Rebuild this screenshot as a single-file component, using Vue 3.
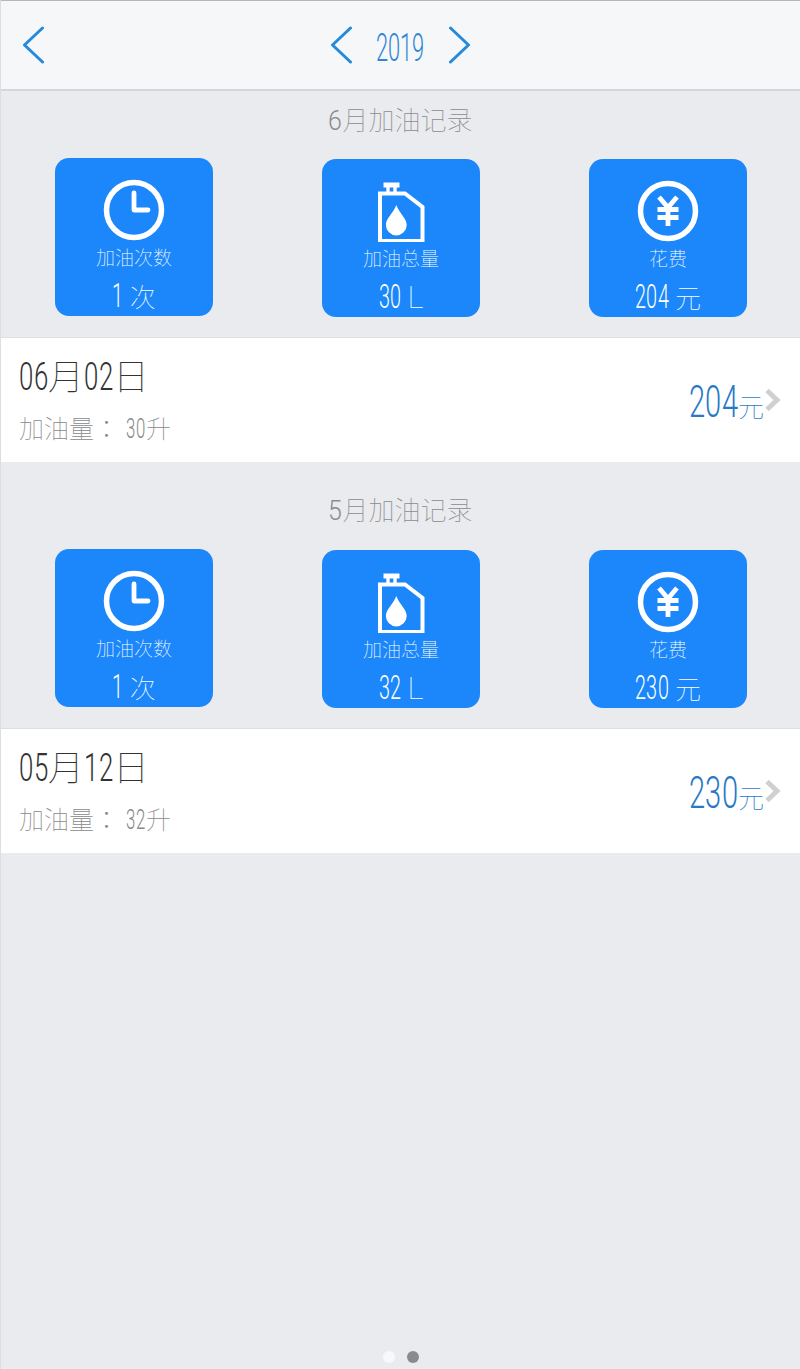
<template>
  <div class="page">
    <header class="top-bar">
      <button class="nav-btn back">
        <svg width="22" height="38" viewBox="0 0 22 38"><path d="M20.5 2 L2.5 19 L20.5 36" /></svg>
      </button>
      <div class="year-switch">
        <button class="nav-btn">
          <svg width="22" height="38" viewBox="0 0 22 38"><path d="M20.5 2 L2.5 19 L20.5 36" /></svg>
        </button>
        <span class="year"><span v-for="c in '2019'" class="d">{{ c }}</span></span>
        <button class="nav-btn">
          <svg width="22" height="38" viewBox="0 0 22 38"><path d="M1.5 2 L19.5 19 L1.5 36" /></svg>
        </button>
      </div>
    </header>

    <section v-for="(m, i) in months" :key="m.month" class="month" :class="{ first: i === 0 }">
      <h2 class="month-title"><span class="d">{{ m.month }}</span>月加油记录</h2>
      <div class="tiles">
        <div class="tile tile-left">
          <svg class="tile-icon" width="62" height="62" viewBox="0 0 62 62">
            <circle cx="31" cy="31" r="27.5" fill="none" stroke="#fff" stroke-width="5.5" />
            <path d="M31 14 V31 H45" fill="none" stroke="#fff" stroke-width="4.8" stroke-linecap="round" stroke-linejoin="round" />
          </svg>
          <div class="tile-label">加油次数</div>
          <div class="tile-value"><span class="d">1</span> 次</div>
        </div>
        <div class="tile">
          <svg class="tile-icon" width="62" height="62" viewBox="0 0 62 62">
            <path d="M10 13.5 H35 L52.5 27 V61 H10 Z" fill="none" stroke="#fff" stroke-width="4" />
            <path d="M18 7 V13 M25 7 V13" fill="none" stroke="#fff" stroke-width="3.4" />
            <rect x="13.5" y="2.5" width="16" height="5" fill="#fff" />
            <path d="M26.3 25 C29 33 36.7 38 36.7 45 A10.4 10.4 0 0 1 15.9 45 C15.9 38 23.6 33 26.3 25 Z" fill="#fff" />
          </svg>
          <div class="tile-label">加油总量</div>
          <div class="tile-value"><span v-for="c in String(m.liters)" class="d">{{ c }}</span> <span class="unit-l">L</span></div>
        </div>
        <div class="tile">
          <svg class="tile-icon" width="62" height="62" viewBox="0 0 62 62">
            <circle cx="31" cy="31" r="27.5" fill="none" stroke="#fff" stroke-width="5.5" />
            <path d="M22 17 L31 27.5 L40 17 M20.5 29.5 H41.5 M20.5 37.5 H41.5 M31 28 V46" fill="none" stroke="#fff" stroke-width="4.8" />
          </svg>
          <div class="tile-label">花费</div>
          <div class="tile-value"><span v-for="c in String(m.cost)" class="d">{{ c }}</span> 元</div>
        </div>
      </div>
      <div class="record">
        <div class="record-main">
          <div class="record-date"><span v-for="c in m.mm" class="d">{{ c }}</span>月<span v-for="c in m.dd" class="d">{{ c }}</span>日</div>
          <div class="record-sub">加油量<span class="colon">：</span><span v-for="c in String(m.liters)" class="d">{{ c }}</span>升</div>
        </div>
        <div class="record-cost"><span v-for="c in String(m.cost)" class="d">{{ c }}</span>元</div>
        <svg class="record-arrow" width="18" height="24" viewBox="0 0 18 24"><path d="M3 2.5 L13 12 L3 21.5" /></svg>
      </div>
    </section>

    <div class="dots">
      <span class="dot on"></span>
      <span class="dot"></span>
    </div>
  </div>
</template>

<script setup>
const months = [
  { month: 6, liters: 30, cost: 204, mm: '06', dd: '02' },
  { month: 5, liters: 32, cost: 230, mm: '05', dd: '12' },
]
</script>

<style>
html, body { margin: 0; }
</style>

<style scoped>
.page {
  min-height: 1369px;
  display: flex;
  flex-direction: column;
  box-sizing: border-box;
  background: #e9ebef;
  border-left: 1px solid #dcdee2;
  font-family: Roboto, "Noto Sans CJK SC", sans-serif;
  font-weight: 100;
}

/* digits are much narrower than any installed face, so squeeze them one by one */
.d {
  display: inline-block;
  width: var(--dw);
  font-size: var(--dsize);
  font-weight: 300;
  transform: scaleX(var(--ds));
  transform-origin: 0 50%;
}

.top-bar {
  height: 91px;
  box-sizing: border-box;
  flex: none;
  display: flex;
  align-items: center;
  justify-content: center;
  position: relative;
  background: #f5f7f9;
  border-top: 1px solid #b4b6b9;
  border-bottom: 2px solid #d4d6da;
}

.nav-btn {
  display: flex;
  padding: 0;
  border: 0;
  background: none;
}

.nav-btn path {
  fill: none;
  stroke: #2589dc;
  stroke-width: 3;
  stroke-linecap: round;
  stroke-linejoin: round;
}

.back {
  position: absolute;
  left: 21px;
  top: 25px;
}

.year-switch {
  display: flex;
  align-items: center;
  gap: 24px;
  margin-left: -1px;
}

.year {
  --dsize: 38px;
  --dw: 12.25px;
  --ds: 0.575;
  line-height: 38px;
  padding-top: 14px;
  color: #2f86d4;
}

.month {
  display: flex;
  flex-direction: column;
}

.month-title {
  --dsize: 28px;
  --dw: 14px;
  --ds: 0.89;
  margin: 0;
  padding-top: 31px;
  height: 87px;
  box-sizing: border-box;
  font-size: 26px;
  line-height: 36px;
  font-weight: 100;
  text-align: center;
  color: #8c8c8c;
}

.month.first .month-title {
  padding-top: 12px;
  height: 67px;
}

.tiles {
  display: flex;
  align-items: flex-end;
  justify-content: space-between;
  padding: 0 53px 0 54px;
  margin-bottom: 20px;
}

.tile {
  width: 158px;
  height: 158px;
  box-sizing: border-box;
  padding-top: 21px;
  display: flex;
  flex-direction: column;
  align-items: center;
  background: #1b87fb;
  border-radius: 14px;
  color: #fff;
}

.tile-left {
  margin-bottom: 1px;
}

.tile-icon {
  flex: none;
}

.tile-label {
  margin-top: 5px;
  font-size: 19px;
  line-height: 26px;
  color: #fff;
}

.tile-value {
  --dsize: 33px;
  --dw: 11.3px;
  --ds: 0.6;
  margin-top: 6px;
  font-size: 26px;
  line-height: 36px;
  white-space: pre;
}

.unit-l {
  font-size: 31px;
  font-weight: 100;
}

.record {
  height: 125px;
  box-sizing: border-box;
  display: flex;
  align-items: center;
  padding: 0 18px;
  background: #fff;
  border-top: 1px solid #dcdee2;
}

.record-main {
  flex: 1;
}

.record-date {
  --dsize: 38px;
  --dw: 14.5px;
  --ds: 0.68;
  font-size: 36px;
  line-height: 46px;
  color: #333;
}

.record-sub {
  --dsize: 28px;
  --dw: 10px;
  --ds: 0.6;
  margin-top: 10px;
  font-size: 25px;
  line-height: 32px;
  color: #888;
}

.colon {
  font-family: "Noto Sans CJK TC", sans-serif;
  margin-right: 7px;
}

.record-cost {
  --dsize: 45px;
  --dw: 16.3px;
  --ds: 0.646;
  font-size: 26px;
  line-height: 46px;
  color: #2878c8;
  margin-top: 10px;
}

.record-arrow {
  margin-top: 0;
}

.record-arrow path {
  fill: none;
  stroke: #cfd0d2;
  stroke-width: 5;
}

.dots {
  margin-top: auto;
  padding-bottom: 6px;
  display: flex;
  justify-content: center;
  gap: 12px;
}

.dot {
  width: 12px;
  height: 12px;
  border-radius: 50%;
  background: #888a8c;
}

.dot.on {
  background: #f7f8fa;
}
</style>
